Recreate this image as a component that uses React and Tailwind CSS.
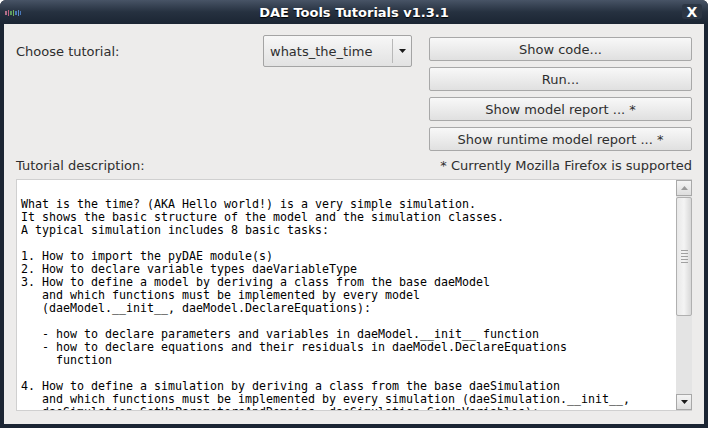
import React from "react";

const description = `
What is the time? (AKA Hello world!) is a very simple simulation.
It shows the basic structure of the model and the simulation classes.
A typical simulation includes 8 basic tasks:

1. How to import the pyDAE module(s)
2. How to declare variable types daeVariableType
3. How to define a model by deriving a class from the base daeModel
   and which functions must be implemented by every model
   (daeModel.__init__, daeModel.DeclareEquations):

   - how to declare parameters and variables in daeModel.__init__ function
   - how to declare equations and their residuals in daeModel.DeclareEquations
     function

4. How to define a simulation by deriving a class from the base daeSimulation
   and which functions must be implemented by every simulation (daeSimulation.__init__,
   daeSimulation.SetUpParametersAndDomains, daeSimulation.SetUpVariables):`;

const buttons = [
  "Show code...",
  "Run...",
  "Show model report ... *",
  "Show runtime model report ... *",
];

// маленький логотип в заголовке окна
function AppIcon() {
  return (
    <svg width="16" height="6" viewBox="0 0 16 6">
      <rect x="0" y="1" width="2" height="4" fill="#b0708a" />
      <rect x="3" y="0" width="1" height="6" fill="#c06080" />
      <rect x="5" y="1" width="2" height="4" fill="#5a9a60" />
      <rect x="8" y="0" width="1" height="6" fill="#6fae5a" />
      <rect x="10" y="1" width="2" height="4" fill="#4a78b8" />
      <rect x="13" y="0" width="1" height="6" fill="#5a88c8" />
      <rect x="15" y="1" width="1" height="4" fill="#4a78b8" />
    </svg>
  );
}

function Arrow({ up }) {
  return (
    <svg width="7" height="4" viewBox="0 0 7 4">
      <path d={up ? "M0 4 L3.5 0 L7 4 Z" : "M0 0 L7 0 L3.5 4 Z"} fill={up ? "#9a9a9a" : "#1a1a1a"} />
    </svg>
  );
}

export default function App() {
  return (
    <div
      className="w-[708px] h-[428px] flex flex-col bg-[#1b2533] rounded-t-[6px] overflow-hidden"
      style={{ fontFamily: "'DejaVu Sans', sans-serif" }}
    >
      {/* заголовок окна */}
      <div className="h-[24px] shrink-0 relative flex items-center justify-center bg-gradient-to-b from-[#485466] via-[#263140] to-[#1b2533]">
        <div className="absolute left-[5px] top-[10px] flex">
          <AppIcon />
        </div>
        <span className="text-white text-[13px] font-bold leading-none [text-shadow:0_1px_1px_#000]">
          DAE Tools Tutorials v1.3.1
        </span>
        <div className="absolute right-[6px] top-[4px] w-[20px] h-[15px] rounded-[3px] bg-[#2c3644] flex items-center justify-center text-white text-[14px] font-bold leading-none">
          X
        </div>
      </div>

      {/* содержимое */}
      <div className="flex-1 min-h-0 mx-[4px] mb-[4px] bg-[#edeceb] px-[12px] pt-[11px] pb-[13px] flex flex-col text-[#2e2e2e] text-[13px]">
        <div className="flex items-start shrink-0">
          <div className="flex-1 pt-[9px] leading-[16px]">Choose tutorial:</div>
          <div className="w-[149px] h-[32px] border border-[#a4a4a4] rounded-[2px] bg-gradient-to-b from-[#f7f7f7] to-[#e2e2e2] flex items-center">
            <span className="flex-1 pl-[6px] leading-none">whats_the_time</span>
            <div className="w-px h-[24px] bg-[#b8b8b8]" />
            <div className="w-[18px] flex justify-center">
              <Arrow />
            </div>
          </div>
          <div className="w-[263px] ml-[17px] pt-[2px] flex flex-col gap-[6px]">
            {buttons.map((b) => (
              <div
                key={b}
                className="h-[24px] border border-[#a8a8a8] rounded-[2px] bg-gradient-to-b from-[#f8f8f8] to-[#e0e0e0] flex items-center justify-center leading-none"
              >
                {b}
              </div>
            ))}
          </div>
        </div>

        <div className="flex justify-between shrink-0 mt-[7px] leading-[16px]">
          <span>Tutorial description:</span>
          <span>* Currently Mozilla Firefox is supported</span>
        </div>

        <div className="flex-1 min-h-0 mt-[5px] flex bg-white border-l border-t border-b border-[#d0d0d0] overflow-hidden">
          <pre
            className="flex-1 min-h-0 overflow-hidden pl-[4px] pt-[5px] text-[11.63px] leading-[13px] text-black"
            style={{ fontFamily: "'DejaVu Sans Mono', monospace" }}
          >
            {description}
          </pre>
          <div className="w-[16px] flex flex-col bg-[#e4e4e4]">
            <div className="h-[16px] shrink-0 border border-[#a8a8a8] bg-gradient-to-b from-[#f4f4f4] to-[#dedede] flex items-center justify-center">
              <Arrow up />
            </div>
            <div className="flex-1 min-h-0 flex flex-col pt-[1px]">
              <div className="h-[119px] border border-[#b0b0b0] rounded-[2px] bg-gradient-to-r from-[#e8e8e8] via-[#f4f4f4] to-[#d8d8d8] flex flex-col items-center justify-center gap-[2px]">
                {[0, 1, 2, 3, 4].map((i) => (
                  <div key={i} className="w-[7px] h-px bg-[#a0a0a0]" />
                ))}
              </div>
            </div>
            <div className="h-[16px] shrink-0 border border-[#a8a8a8] bg-gradient-to-b from-[#f4f4f4] to-[#dedede] flex items-center justify-center">
              <Arrow />
            </div>
          </div>
        </div>
      </div>
    </div>
  );
}
